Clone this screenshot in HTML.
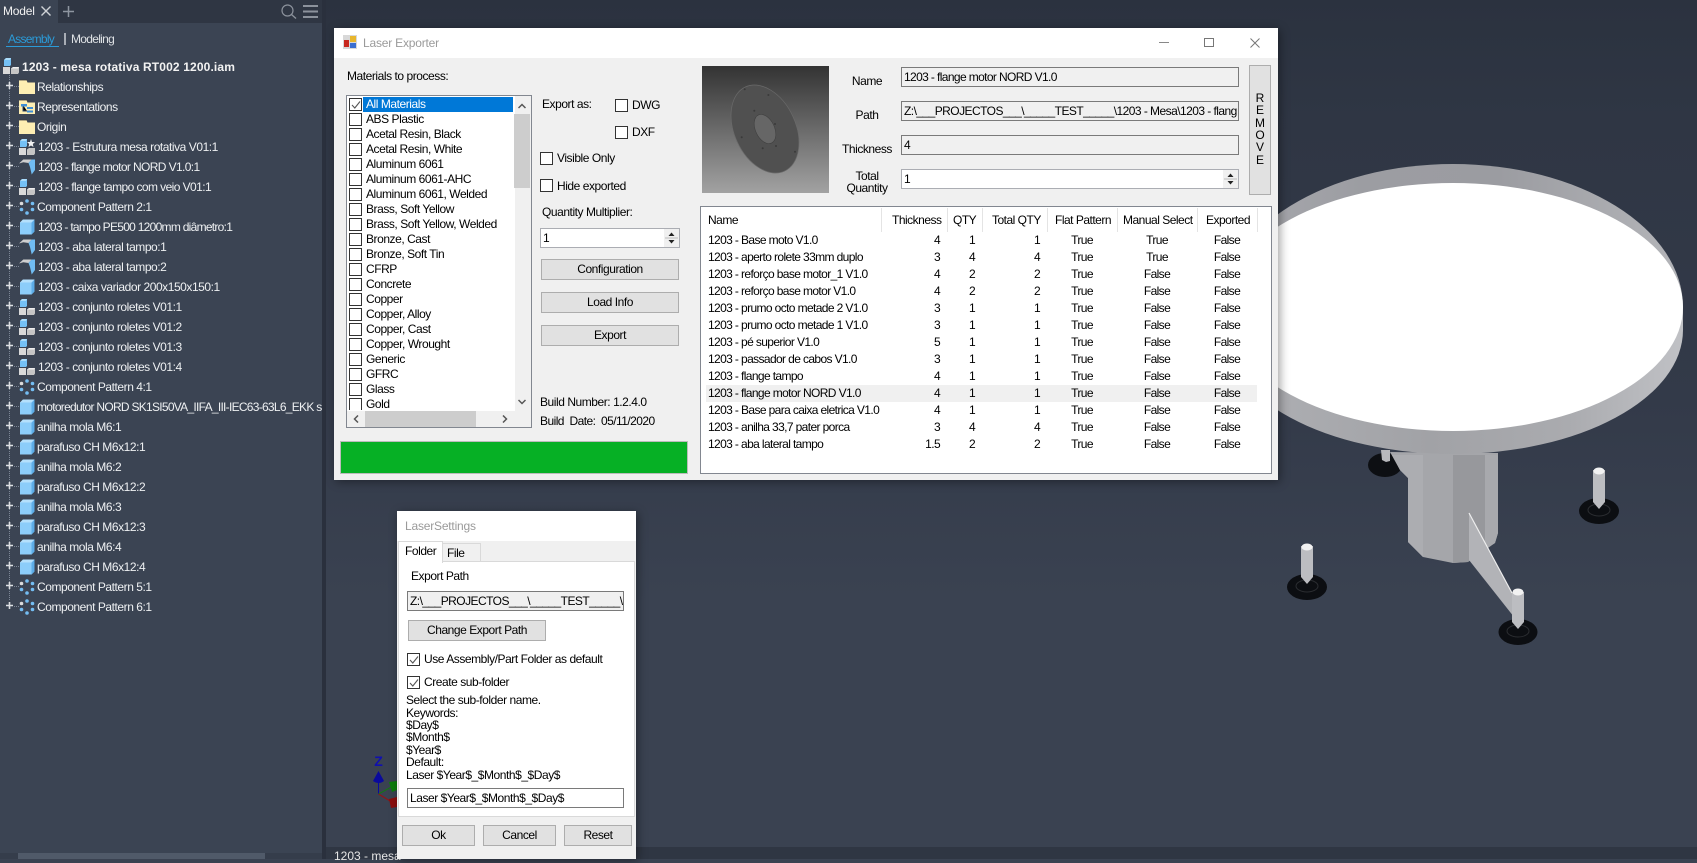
<!DOCTYPE html>
<html><head><meta charset="utf-8"><title>Laser Exporter</title>
<style>
html,body{margin:0;padding:0}
body{width:1697px;height:859px;position:relative;overflow:hidden;background:#3a4251;font:12px/14px "Liberation Sans",sans-serif;letter-spacing:-.45px;color:#000}
#vp{position:absolute;left:326px;top:0;width:1371px;height:859px;background:linear-gradient(180deg,#2b323f 0,#2f3644 120px,#333a49 400px,#3a4251 600px,#3a4251 100%)}
.a,.t,.cb,.bt,.in{position:absolute;box-sizing:border-box}
.t{white-space:nowrap}
#pn{position:absolute;left:0;top:0;width:322px;height:859px;background:#3b4453;color:#eef0f2}
#gap{position:absolute;left:322px;top:0;width:4px;height:859px;background:#2a303d}
.r{position:absolute;left:0;height:20px;width:322px;overflow:hidden}
.r span{position:absolute;left:38px;top:3px;white-space:nowrap}
.r span.f{left:37px}
.r svg.p{position:absolute;left:6px;top:5px;width:7px;height:7px}
.r svg.i{position:absolute;left:19px;top:2px;width:16px;height:16px}
.r i{position:absolute;left:14px;top:9px;width:5px;border-top:1px dotted #7d8796}
.w{position:absolute;background:#f0f0f0;box-shadow:2px 2px 9px rgba(0,0,0,.38)}
.cb{width:13px;height:13px;background:#fff;border:1px solid #333}
.cb svg{position:absolute;left:1px;top:1px;width:10px;height:10px}
.bt{background:#e1e1e1;border:1px solid #adadad;text-align:center;line-height:19px}
.in{border:1px solid #7a7a7a;white-space:nowrap;overflow:hidden}
#ml div.it{position:absolute;left:19px;white-space:nowrap;line-height:15px;height:15px}
#ml .cb{left:2px}
#tbl{position:absolute;left:706px;top:232px;border-collapse:collapse;table-layout:fixed;width:551px}
#tbl td{height:17px;padding:0;line-height:17px;white-space:nowrap;letter-spacing:-.62px;overflow:visible}
td.n{padding-left:2px!important}
td.rr{text-align:right;padding-right:7px!important}
td.cc{text-align:center}
tr.h td{background:#f0f0f0}
.sep{position:absolute;top:208px;height:24px;width:1px;background:#e4e4e4}
.hd{position:absolute;top:213px;line-height:14px;white-space:nowrap;letter-spacing:-.5px}
.lab{position:absolute;white-space:nowrap;transform:translateX(-50%)}
</style></head><body>
<svg width="0" height="0" style="position:absolute">
<symbol id="plus" viewBox="0 0 7 7"><path d="M0 3.500H7M3.500 0V7" stroke="#dcdfe3" stroke-width="1.600"/></symbol>
<symbol id="fo" viewBox="0 0 16 16"><path d="M0 1H7.500L8.500 3.500H16V15H0z" fill="#fdeeb3"/><path d="M0 1H8" stroke="#3b3b3b" stroke-width=".8"/></symbol>
<symbol id="fr" viewBox="0 0 16 16"><path d="M0 1H7.500L8.500 3.500H16V15H0z" fill="#fdeeb3"/><path d="M0 1H8" stroke="#3b3b3b" stroke-width=".8"/><path d="M3 6H8M4 6V12H8M9 9H14M9 12H14" stroke="#334a6b" stroke-width="1"/><rect x="2" y="5" width="6" height="2.500" fill="#3f8fd6"/><rect x="8" y="8" width="6" height="2" fill="#3f8fd6"/><rect x="8" y="11.500" width="6" height="2" fill="#3f8fd6"/></symbol>
<symbol id="as" viewBox="0 0 16 16"><path d="M1 2 3 0H8V7L7 8H1z" fill="#75c1f5"/><path d="M1 2 3 0H8L7 2z" fill="#aadcfb"/><rect y="9" width="7" height="7" fill="#d9d9d9"/><path d="M8 10.500 10 9H16V14.500L15 16H8z" fill="#c5c5c5"/><path d="M8 10.500 10 9H16L15 10.500z" fill="#efefef"/></symbol>
<symbol id="st" viewBox="0 0 16 16"><path d="M1 2 3 0H8V7L7 8H1z" fill="#75c1f5"/><path d="M1 2 3 0H8L7 2z" fill="#aadcfb"/><rect y="9" width="7" height="7" fill="#d9d9d9"/><path d="M8 10.500 10 9H16V14.500L15 16H8z" fill="#c5c5c5"/><path d="M12 0 13 3 16 3 13.800 5 14.500 8 12 6.500 9.500 8 10.200 5 8 3 11 3z" fill="#f2f2f2"/></symbol>
<symbol id="pa" viewBox="0 0 16 16"><path d="M1 3.500 4 .5H15.500V12.500L12.500 15.500H1z" fill="#8ccdfa"/><path d="M12.500 3.500 15.500 .5V12.500L12.500 15.500z" fill="#5dade8"/><path d="M1 3.500 4 .5H15.500L12.500 3.500z" fill="#b5e0fc"/></symbol>
<symbol id="sh" viewBox="0 0 16 16"><path d="M0 4.500 4.300 .5H12.700L9.500 4 4.300 3.200z" fill="#cfcfcf"/><path d="M12.700 .5H16V11L12.700 15.500 11 8 9.500 4z" fill="#71bdf3"/></symbol>
<symbol id="pt" viewBox="0 0 16 16"><g fill="#74bdf2"><circle cx="8" cy="2" r="1.800"/><circle cx="13.500" cy="4.500" r="1.800"/><circle cx="13.500" cy="10.500" r="1.800"/><circle cx="8" cy="14" r="1.800"/><circle cx="2.500" cy="10.500" r="1.800"/></g><circle cx="2.500" cy="4.500" r="1.800" fill="#dcdcdc"/></symbol>
<symbol id="ck" viewBox="0 0 10 10"><path d="M1 5 3.800 8 9 1.500" fill="none" stroke="#555" stroke-width="1.100"/></symbol>
</svg>

<div id="vp"></div>

<!-- 3D scene -->
<svg class="a" style="left:0;top:0" width="1697" height="859" viewBox="0 0 1697 859">
<defs>
<linearGradient id="rim" x1="0" x2="1" y1="0" y2="0"><stop offset="0" stop-color="#a9aaaf"/><stop offset=".3" stop-color="#9c9da2"/><stop offset=".6" stop-color="#9b9ca1"/><stop offset="1" stop-color="#b4b5b9"/></linearGradient>
<linearGradient id="rimb" x1="0" x2="1" y1="0" y2="0"><stop offset="0" stop-color="#b0b1b5"/><stop offset=".45" stop-color="#a1a2a6"/><stop offset=".75" stop-color="#aaabaf"/><stop offset="1" stop-color="#c0c1c5"/></linearGradient>
</defs>
<!-- rear foot -->
<ellipse cx="1385" cy="465" rx="17" ry="12" fill="#0d0f13"/>
<path d="M1381 450H1390V461L1386 462 1382 460z" fill="#b8b9bd"/>
<!-- column -->
<path d="M1390 452 1498 453V533L1495 543 1468 562 1453 563 1423 557 1408 542V478L1400 470z" fill="#a5a6aa"/>
<path d="M1453 455H1485V540L1468 562 1453 563z" fill="#97989c"/>
<path d="M1485 455H1498V533L1495 543 1485 549z" fill="#a8a9ad"/>
<path d="M1408 478V542L1423 557V455H1392L1400 470z" fill="#acadb1"/>
<!-- fin -->
<path d="M1469 513 1512 593 1514 617 1469 560z" fill="#b2b3b7"/>
<path d="M1469 513 1512 593" stroke="#eeeeee" stroke-width="1.200"/>
<!-- table -->
<path d="M1223 330A230 124 0 0 0 1683 330V307H1223z" fill="url(#rimb)"/>
<path d="M1223 307A230 143 0 0 1 1683 307z" fill="url(#rim)"/>
<ellipse cx="1453" cy="307" rx="230" ry="124" fill="#fff"/>
<!-- feet -->
<g>
<ellipse cx="1307" cy="587" rx="20" ry="13" fill="#0c0e12"/><ellipse cx="1307" cy="586" rx="11" ry="6" fill="none" stroke="#2b2d31"/>
<path d="M1301 546H1313V577L1307 584 1301 577z" fill="#bcbdc1"/><ellipse cx="1307" cy="547" rx="5.500" ry="3.500" fill="#f2f2f2"/>
<ellipse cx="1599" cy="511" rx="20" ry="13" fill="#0c0e12"/><ellipse cx="1599" cy="510" rx="11" ry="6" fill="none" stroke="#2b2d31"/>
<path d="M1593 470H1605V502L1599 509 1593 502z" fill="#bcbdc1"/><ellipse cx="1599" cy="471" rx="5.500" ry="3.500" fill="#f2f2f2"/>
<ellipse cx="1518" cy="632" rx="19.500" ry="13" fill="#0c0e12"/><ellipse cx="1518" cy="631" rx="11" ry="6" fill="none" stroke="#2b2d31"/>
<path d="M1512 592H1524V622L1518 629 1512 622z" fill="#bcbdc1"/><ellipse cx="1518" cy="592" rx="5.500" ry="3.500" fill="#f2f2f2"/>
</g>
<!-- triad -->
<path d="M378.500 794V775" stroke="#0a0aa0" stroke-width="1"/>
<path d="M378.500 794 395 785" stroke="#127a12" stroke-width="1"/>
<path d="M378.500 794 395 804" stroke="#9a1010" stroke-width="1"/>
<path d="M378.500 771 384 781Q378.500 785 373 781z" fill="#0a0a9c"/>
<path d="M389 782 397 781V790L392 792z" fill="#0b7d0b"/>
<path d="M389 799 397 797V807L391 808z" fill="#8a0d0d"/>
<text x="378.500" y="766" font-size="14" font-family="Liberation Sans" font-weight="bold" fill="#1010b0" text-anchor="middle" letter-spacing="0">Z</text>
</svg>

<!-- bottom bar -->
<div class="a" style="left:326px;top:847px;width:1371px;height:12px;background:#2f3643"></div>
<div class="t" style="left:334px;top:849px;color:#e6e6e6;letter-spacing:0">1203 - mesa</div>

<!-- left panel -->
<div id="gap"></div>
<div id="pn">
<div class="a" style="left:58px;top:0;width:264px;height:23px;background:#2f3643"></div>
<div class="t" style="left:3px;top:4px;color:#f2f2f2;letter-spacing:-.2px">Model</div>
<svg class="a" style="left:41px;top:6px" width="10" height="10"><path d="M.5.5 9.500 9.500M9.500.5.5 9.500" stroke="#cfd2d6" stroke-width="1.400"/></svg>
<svg class="a" style="left:63px;top:6px" width="11" height="11"><path d="M5.500 0V11M0 5.500H11" stroke="#8e95a0" stroke-width="1.500"/></svg>
<svg class="a" style="left:281px;top:4px" width="16" height="15"><circle cx="6.500" cy="6.500" r="5.500" fill="none" stroke="#8c929c" stroke-width="1.200"/><path d="M10.500 10.500 15 14.500" stroke="#8c929c" stroke-width="1.300"/></svg>
<svg class="a" style="left:303px;top:5px" width="15" height="13"><path d="M0 1H15M0 6.500H15M0 12H15" stroke="#8c929c" stroke-width="2"/></svg>
<div class="t" style="left:8px;top:32px;color:#2b9bd8;letter-spacing:-.75px">Assembly</div>
<div class="a" style="left:6px;top:46px;width:53px;height:1px;background:#2b9bd8"></div>
<div class="a" style="left:64px;top:33px;width:2px;height:12px;background:#a8adb5"></div>
<div class="t" style="left:71px;top:32px;color:#dfe2e5;letter-spacing:-.7px">Modeling</div>
<svg class="a" style="left:3px;top:58px;width:16px;height:16px"><use href="#as"/></svg>
<div class="t" style="left:22px;top:60px;font-weight:bold;color:#f2f2f2;letter-spacing:.14px">1203 - mesa rotativa RT002 1200.iam</div>
<div class="a" style="left:9px;top:75px;height:525px;border-left:1px dotted #7d8796"></div>

<div class="r" style="top:77px"><svg class="p"><use href="#plus"/></svg><i></i><svg class="i"><use href="#fo"/></svg><span class="f">Relationships</span></div>
<div class="r" style="top:97px"><svg class="p"><use href="#plus"/></svg><i></i><svg class="i"><use href="#fr"/></svg><span class="f">Representations</span></div>
<div class="r" style="top:117px"><svg class="p"><use href="#plus"/></svg><i></i><svg class="i"><use href="#fo"/></svg><span class="f">Origin</span></div>
<div class="r" style="top:137px"><svg class="p"><use href="#plus"/></svg><i></i><svg class="i"><use href="#st"/></svg><span>1203 - Estrutura mesa rotativa V01:1</span></div>
<div class="r" style="top:157px"><svg class="p"><use href="#plus"/></svg><i></i><svg class="i"><use href="#sh"/></svg><span style="letter-spacing:-.62px">1203 - flange motor NORD V1.0:1</span></div>
<div class="r" style="top:177px"><svg class="p"><use href="#plus"/></svg><i></i><svg class="i"><use href="#as"/></svg><span style="letter-spacing:-.58px">1203 - flange tampo com veio V01:1</span></div>
<div class="r" style="top:197px"><svg class="p"><use href="#plus"/></svg><i></i><svg class="i"><use href="#pt"/></svg><span class="f">Component Pattern 2:1</span></div>
<div class="r" style="top:217px"><svg class="p"><use href="#plus"/></svg><i></i><svg class="i"><use href="#pa"/></svg><span style="letter-spacing:-.72px">1203 - tampo PE500 1200mm diâmetro:1</span></div>
<div class="r" style="top:237px"><svg class="p"><use href="#plus"/></svg><i></i><svg class="i"><use href="#sh"/></svg><span>1203 - aba lateral tampo:1</span></div>
<div class="r" style="top:257px"><svg class="p"><use href="#plus"/></svg><i></i><svg class="i"><use href="#sh"/></svg><span>1203 - aba lateral tampo:2</span></div>
<div class="r" style="top:277px"><svg class="p"><use href="#plus"/></svg><i></i><svg class="i"><use href="#pa"/></svg><span>1203 - caixa variador 200x150x150:1</span></div>
<div class="r" style="top:297px"><svg class="p"><use href="#plus"/></svg><i></i><svg class="i"><use href="#as"/></svg><span>1203 - conjunto roletes V01:1</span></div>
<div class="r" style="top:317px"><svg class="p"><use href="#plus"/></svg><i></i><svg class="i"><use href="#as"/></svg><span>1203 - conjunto roletes V01:2</span></div>
<div class="r" style="top:337px"><svg class="p"><use href="#plus"/></svg><i></i><svg class="i"><use href="#as"/></svg><span>1203 - conjunto roletes V01:3</span></div>
<div class="r" style="top:357px"><svg class="p"><use href="#plus"/></svg><i></i><svg class="i"><use href="#as"/></svg><span>1203 - conjunto roletes V01:4</span></div>
<div class="r" style="top:377px"><svg class="p"><use href="#plus"/></svg><i></i><svg class="i"><use href="#pt"/></svg><span class="f">Component Pattern 4:1</span></div>
<div class="r" style="top:397px"><svg class="p"><use href="#plus"/></svg><i></i><svg class="i"><use href="#pa"/></svg><span class="f" style="letter-spacing:-.72px">motoredutor NORD SK1SI50VA_IIFA_III-IEC63-63L6_EKK s</span></div>
<div class="r" style="top:417px"><svg class="p"><use href="#plus"/></svg><i></i><svg class="i"><use href="#pa"/></svg><span class="f">anilha mola M6:1</span></div>
<div class="r" style="top:437px"><svg class="p"><use href="#plus"/></svg><i></i><svg class="i"><use href="#pa"/></svg><span class="f">parafuso CH M6x12:1</span></div>
<div class="r" style="top:457px"><svg class="p"><use href="#plus"/></svg><i></i><svg class="i"><use href="#pa"/></svg><span class="f">anilha mola M6:2</span></div>
<div class="r" style="top:477px"><svg class="p"><use href="#plus"/></svg><i></i><svg class="i"><use href="#pa"/></svg><span class="f">parafuso CH M6x12:2</span></div>
<div class="r" style="top:497px"><svg class="p"><use href="#plus"/></svg><i></i><svg class="i"><use href="#pa"/></svg><span class="f">anilha mola M6:3</span></div>
<div class="r" style="top:517px"><svg class="p"><use href="#plus"/></svg><i></i><svg class="i"><use href="#pa"/></svg><span class="f">parafuso CH M6x12:3</span></div>
<div class="r" style="top:537px"><svg class="p"><use href="#plus"/></svg><i></i><svg class="i"><use href="#pa"/></svg><span class="f">anilha mola M6:4</span></div>
<div class="r" style="top:557px"><svg class="p"><use href="#plus"/></svg><i></i><svg class="i"><use href="#pa"/></svg><span class="f">parafuso CH M6x12:4</span></div>
<div class="r" style="top:577px"><svg class="p"><use href="#plus"/></svg><i></i><svg class="i"><use href="#pt"/></svg><span class="f">Component Pattern 5:1</span></div>
<div class="r" style="top:597px"><svg class="p"><use href="#plus"/></svg><i></i><svg class="i"><use href="#pt"/></svg><span class="f">Component Pattern 6:1</span></div>

<div class="a" style="left:0;top:853px;width:322px;height:6px;background:#353d4b"></div>
<div class="a" style="left:18px;top:853px;width:247px;height:6px;background:#505a69"></div>
</div>

<!-- Laser Exporter window -->
<div class="w" style="left:334px;top:28px;width:944px;height:452px"></div>
<div class="a" style="left:334px;top:28px;width:944px;height:30px;background:#fff"></div>
<svg class="a" style="left:343px;top:35px" width="14" height="14"><rect width="14" height="14" fill="#d8d8d8"/><rect x="7" y="1" width="6" height="6" fill="#e8b62c"/><rect x="1" y="5" width="5" height="7" fill="#c8281e"/><rect x="7" y="8" width="6" height="5" fill="#3b6fd0"/></svg>
<div class="t" style="left:363px;top:36px;color:#9a9a9a;letter-spacing:-.2px">Laser Exporter</div>
<div class="a" style="left:1159px;top:42px;width:10px;height:1px;background:#888"></div>
<div class="a" style="left:1204px;top:38px;width:10px;height:9px;border:1px solid #777;box-sizing:border-box"></div>
<svg class="a" style="left:1250px;top:38px" width="10" height="10"><path d="M.5.5 9.500 9.500M9.500.5.5 9.500" stroke="#777" stroke-width="1"/></svg>

<div class="t" style="left:347px;top:69px">Materials to process:</div>

<div id="ml" class="a" style="left:346px;top:95px;width:186px;height:333px;background:#f0f0f0;border:1px solid #828790;box-sizing:border-box;overflow:hidden">
<div class="a" style="left:0;top:0;width:168px;height:315px;background:#fff"></div>
<div class="a" style="left:16px;top:1px;width:150px;height:15px;background:#0078d7"></div>
<div class="cb" style="top:2px"><svg><use href="#ck"/></svg></div><div class="it" style="top:1px;color:#fff">All Materials</div>
<div class="cb" style="top:17px"></div><div class="it" style="top:16px">ABS Plastic</div>
<div class="cb" style="top:32px"></div><div class="it" style="top:31px">Acetal Resin, Black</div>
<div class="cb" style="top:47px"></div><div class="it" style="top:46px">Acetal Resin, White</div>
<div class="cb" style="top:62px"></div><div class="it" style="top:61px">Aluminum 6061</div>
<div class="cb" style="top:77px"></div><div class="it" style="top:76px">Aluminum 6061-AHC</div>
<div class="cb" style="top:92px"></div><div class="it" style="top:91px">Aluminum 6061, Welded</div>
<div class="cb" style="top:107px"></div><div class="it" style="top:106px">Brass, Soft Yellow</div>
<div class="cb" style="top:122px"></div><div class="it" style="top:121px">Brass, Soft Yellow, Welded</div>
<div class="cb" style="top:137px"></div><div class="it" style="top:136px">Bronze, Cast</div>
<div class="cb" style="top:152px"></div><div class="it" style="top:151px">Bronze, Soft Tin</div>
<div class="cb" style="top:167px"></div><div class="it" style="top:166px">CFRP</div>
<div class="cb" style="top:182px"></div><div class="it" style="top:181px">Concrete</div>
<div class="cb" style="top:197px"></div><div class="it" style="top:196px">Copper</div>
<div class="cb" style="top:212px"></div><div class="it" style="top:211px">Copper, Alloy</div>
<div class="cb" style="top:227px"></div><div class="it" style="top:226px">Copper, Cast</div>
<div class="cb" style="top:242px"></div><div class="it" style="top:241px">Copper, Wrought</div>
<div class="cb" style="top:257px"></div><div class="it" style="top:256px">Generic</div>
<div class="cb" style="top:272px"></div><div class="it" style="top:271px">GFRC</div>
<div class="cb" style="top:287px"></div><div class="it" style="top:286px">Glass</div>
<div class="cb" style="top:302px;height:12px;border-bottom:0"></div><div class="it" style="top:301px">Gold</div>
<div class="a" style="left:0;top:315px;width:168px;height:16px;background:#f0f0f0"></div>
<div class="a" style="left:18px;top:315px;width:111px;height:16px;background:#cdcdcd"></div>
<div class="a" style="left:167px;top:18px;width:16px;height:74px;background:#cdcdcd"></div>
<svg class="a" style="left:171px;top:7px" width="8" height="6"><path d="M.5 5 4 1.500 7.500 5" fill="none" stroke="#555" stroke-width="1.500"/></svg>
<svg class="a" style="left:171px;top:303px" width="8" height="6"><path d="M.5 1 4 4.500 7.500 1" fill="none" stroke="#555" stroke-width="1.500"/></svg>
<svg class="a" style="left:6px;top:319px" width="6" height="8"><path d="M5 .5 1.500 4 5 7.500" fill="none" stroke="#555" stroke-width="1.500"/></svg>
<svg class="a" style="left:155px;top:319px" width="6" height="8"><path d="M1 .5 4.500 4 1 7.500" fill="none" stroke="#555" stroke-width="1.500"/></svg>
</div>

<div class="t" style="left:542px;top:97px">Export as:</div>
<div class="cb" style="left:615px;top:99px"></div><div class="t" style="left:632px;top:98px">DWG</div>
<div class="cb" style="left:615px;top:126px"></div><div class="t" style="left:632px;top:125px">DXF</div>
<div class="cb" style="left:540px;top:152px"></div><div class="t" style="left:557px;top:151px">Visible Only</div>
<div class="cb" style="left:540px;top:179px"></div><div class="t" style="left:557px;top:179px">Hide exported</div>
<div class="t" style="left:542px;top:205px">Quantity Multiplier:</div>
<div class="in" style="left:540px;top:228px;width:140px;height:20px;background:#fff;border-color:#abadb3;padding:2px 2px;line-height:14px">1</div>
<div class="a" style="left:664px;top:229px;width:15px;height:18px;background:#f0f0f0"></div>
<svg class="a" style="left:664px;top:229px" width="15" height="18"><path d="M4.500 7 7.500 3.500 10.500 7z" fill="#222"/><path d="M4.500 11 7.500 14.500 10.500 11z" fill="#222"/><path d="M1 9H14" stroke="#bbb"/></svg>
<div class="bt" style="left:541px;top:259px;width:138px;height:21px">Configuration</div>
<div class="bt" style="left:541px;top:292px;width:138px;height:21px">Load Info</div>
<div class="bt" style="left:541px;top:325px;width:138px;height:21px">Export</div>
<div class="t" style="left:540px;top:395px">Build Number: 1.2.4.0</div>
<div class="t" style="left:540px;top:414px;letter-spacing:-.55px">Build &nbsp;Date: &nbsp;05/11/2020</div>
<div class="a" style="left:340px;top:441px;width:348px;height:33px;background:#06b025;border:1px solid #bcbcbc;box-sizing:border-box"></div>

<svg class="a" style="left:702px;top:66px" width="127" height="127" viewBox="0 0 127 127">
<defs><linearGradient id="ig" x1="0" x2="0" y1="0" y2="1"><stop offset="0" stop-color="#333"/><stop offset="1" stop-color="#a2a2a2"/></linearGradient></defs>
<rect width="127" height="127" fill="url(#ig)"/>
<g transform="translate(63 63) rotate(-25)">
<ellipse rx="30.600" ry="46.400" fill="#505050" stroke="#6a6a6a" stroke-width=".7"/>
<ellipse rx="9.500" ry="15.500" fill="#666" stroke="#404040" stroke-width=".6"/>
</g>
<g fill="#3a3a3a"><circle cx="42.700" cy="23.300" r="1"/><circle cx="66.400" cy="29" r="1"/><circle cx="52.300" cy="44.700" r="1"/><circle cx="73" cy="58" r="1"/><circle cx="39.700" cy="71.300" r="1"/><circle cx="60.700" cy="82.300" r="1"/><circle cx="74" cy="80" r="1"/><circle cx="93" cy="85.700" r="1"/></g>
</svg>

<div class="lab" style="left:867px;top:74px">Name</div>
<div class="lab" style="left:867px;top:108px">Path</div>
<div class="lab" style="left:867px;top:142px">Thickness</div>
<div class="lab" style="left:867px;top:169px">Total</div>
<div class="lab" style="left:867px;top:181px">Quantity</div>
<div class="in" style="left:901px;top:67px;width:338px;height:20px;padding:2px 2px;letter-spacing:-.62px">1203 - flange motor NORD V1.0</div>
<div class="in" style="left:901px;top:101px;width:338px;height:20px;padding:2px 2px;letter-spacing:-.55px">Z:\___PROJECTOS___\_____TEST_____\1203 - Mesa\1203 - flang</div>
<div class="in" style="left:901px;top:135px;width:338px;height:20px;padding:2px 2px">4</div>
<div class="in" style="left:901px;top:169px;width:338px;height:20px;background:#fff;border-color:#abadb3;padding:2px 2px">1</div>
<svg class="a" style="left:1223px;top:170px" width="15" height="18"><rect width="15" height="18" fill="#f0f0f0"/><path d="M4.500 7 7.500 3.500 10.500 7z" fill="#222"/><path d="M4.500 11 7.500 14.500 10.500 11z" fill="#222"/><path d="M1 9H14" stroke="#bbb"/></svg>
<div class="a" style="left:1249px;top:65px;width:22px;height:130px;background:#e1e1e1;border:1px solid #adadad;box-sizing:border-box"></div>
<div class="t" style="left:1260px;top:91px;transform:translateX(-50%);letter-spacing:0">R</div>
<div class="t" style="left:1260px;top:103px;transform:translateX(-50%);letter-spacing:0">E</div>
<div class="t" style="left:1260px;top:116px;transform:translateX(-50%);letter-spacing:0">M</div>
<div class="t" style="left:1260px;top:128px;transform:translateX(-50%);letter-spacing:0">O</div>
<div class="t" style="left:1260px;top:140px;transform:translateX(-50%);letter-spacing:0">V</div>
<div class="t" style="left:1260px;top:153px;transform:translateX(-50%);letter-spacing:0">E</div>

<!-- list view -->
<div class="a" style="left:700px;top:206px;width:572px;height:268px;background:#fff;border:1px solid #828790;box-sizing:border-box"></div>
<div class="sep" style="left:881px"></div><div class="sep" style="left:947px"></div><div class="sep" style="left:982px"></div><div class="sep" style="left:1047px"></div><div class="sep" style="left:1117px"></div><div class="sep" style="left:1197px"></div><div class="sep" style="left:1257px"></div>
<div class="hd" style="left:708px">Name</div>
<div class="hd" style="left:892px">Thickness</div>
<div class="hd" style="left:953px">QTY</div>
<div class="hd" style="left:992px">Total QTY</div>
<div class="hd" style="left:1055px">Flat Pattern</div>
<div class="hd" style="left:1123px">Manual Select</div>
<div class="hd" style="left:1206px">Exported</div>
<table id="tbl"><colgroup><col style="width:175px"><col style="width:66px"><col style="width:35px"><col style="width:65px"><col style="width:70px"><col style="width:80px"><col style="width:60px"></colgroup>
<tr><td class="n">1203 - Base moto V1.0</td><td class="rr">4</td><td class="rr">1</td><td class="rr">1</td><td class="cc">True</td><td class="cc">True</td><td class="cc">False</td></tr>
<tr><td class="n">1203 - aperto rolete 33mm duplo</td><td class="rr">3</td><td class="rr">4</td><td class="rr">4</td><td class="cc">True</td><td class="cc">True</td><td class="cc">False</td></tr>
<tr><td class="n">1203 - reforço base motor_1 V1.0</td><td class="rr">4</td><td class="rr">2</td><td class="rr">2</td><td class="cc">True</td><td class="cc">False</td><td class="cc">False</td></tr>
<tr><td class="n">1203 - reforço base motor V1.0</td><td class="rr">4</td><td class="rr">2</td><td class="rr">2</td><td class="cc">True</td><td class="cc">False</td><td class="cc">False</td></tr>
<tr><td class="n">1203 - prumo octo metade 2 V1.0</td><td class="rr">3</td><td class="rr">1</td><td class="rr">1</td><td class="cc">True</td><td class="cc">False</td><td class="cc">False</td></tr>
<tr><td class="n">1203 - prumo octo metade 1 V1.0</td><td class="rr">3</td><td class="rr">1</td><td class="rr">1</td><td class="cc">True</td><td class="cc">False</td><td class="cc">False</td></tr>
<tr><td class="n">1203 - pé superior V1.0</td><td class="rr">5</td><td class="rr">1</td><td class="rr">1</td><td class="cc">True</td><td class="cc">False</td><td class="cc">False</td></tr>
<tr><td class="n">1203 - passador de cabos V1.0</td><td class="rr">3</td><td class="rr">1</td><td class="rr">1</td><td class="cc">True</td><td class="cc">False</td><td class="cc">False</td></tr>
<tr><td class="n">1203 - flange tampo</td><td class="rr">4</td><td class="rr">1</td><td class="rr">1</td><td class="cc">True</td><td class="cc">False</td><td class="cc">False</td></tr>
<tr class="h"><td class="n">1203 - flange motor NORD V1.0</td><td class="rr">4</td><td class="rr">1</td><td class="rr">1</td><td class="cc">True</td><td class="cc">False</td><td class="cc">False</td></tr>
<tr><td class="n">1203 - Base para caixa eletrica V1.0</td><td class="rr">4</td><td class="rr">1</td><td class="rr">1</td><td class="cc">True</td><td class="cc">False</td><td class="cc">False</td></tr>
<tr><td class="n">1203 - anilha 33,7 pater porca</td><td class="rr">3</td><td class="rr">4</td><td class="rr">4</td><td class="cc">True</td><td class="cc">False</td><td class="cc">False</td></tr>
<tr><td class="n">1203 - aba lateral tampo</td><td class="rr">1.5</td><td class="rr">2</td><td class="rr">2</td><td class="cc">True</td><td class="cc">False</td><td class="cc">False</td></tr>
</table>

<!-- LaserSettings window -->
<div class="w" style="left:397px;top:511px;width:239px;height:348px"></div>
<div class="a" style="left:397px;top:511px;width:239px;height:30px;background:#fff"></div>
<div class="t" style="left:405px;top:519px;color:#9a9a9a;letter-spacing:-.2px">LaserSettings</div>
<div class="a" style="left:398px;top:561px;width:237px;height:256px;background:#fff;border:1px solid #d9d9d9;box-sizing:border-box"></div>
<div class="a" style="left:442px;top:543px;width:39px;height:19px;background:#f0f0f0;border:1px solid #d9d9d9;box-sizing:border-box"></div>
<div class="a" style="left:398px;top:541px;width:45px;height:22px;background:#fff;border:1px solid #d9d9d9;border-bottom:0;box-sizing:border-box"></div>
<div class="t" style="left:405px;top:544px">Folder</div>
<div class="t" style="left:447px;top:546px">File</div>
<div class="t" style="left:411px;top:569px">Export Path</div>
<div class="in" style="left:407px;top:591px;width:217px;height:20px;background:#f0f0f0;padding:2px 2px;letter-spacing:-.55px">Z:\___PROJECTOS___\_____TEST_____\</div>
<div class="bt" style="left:408px;top:620px;width:138px;height:21px">Change Export Path</div>
<div class="cb" style="left:407px;top:653px"><svg><use href="#ck"/></svg></div><div class="t" style="left:424px;top:652px">Use Assembly/Part Folder as default</div>
<div class="cb" style="left:407px;top:676px"><svg><use href="#ck"/></svg></div><div class="t" style="left:424px;top:675px">Create sub-folder</div>
<div class="t" style="left:406px;top:693px">Select the sub-folder name.</div>
<div class="t" style="left:406px;top:706px">Keywords:</div>
<div class="t" style="left:406px;top:718px">$Day$</div>
<div class="t" style="left:406px;top:730px">$Month$</div>
<div class="t" style="left:406px;top:743px">$Year$</div>
<div class="t" style="left:406px;top:755px">Default:</div>
<div class="t" style="left:406px;top:768px">Laser $Year$_$Month$_$Day$</div>
<div class="in" style="left:407px;top:788px;width:217px;height:20px;background:#fff;padding:2px 2px">Laser $Year$_$Month$_$Day$</div>
<div class="bt" style="left:402px;top:825px;width:73px;height:21px">Ok</div>
<div class="bt" style="left:483px;top:825px;width:73px;height:21px">Cancel</div>
<div class="bt" style="left:564px;top:825px;width:68px;height:21px">Reset</div>
</body></html>
